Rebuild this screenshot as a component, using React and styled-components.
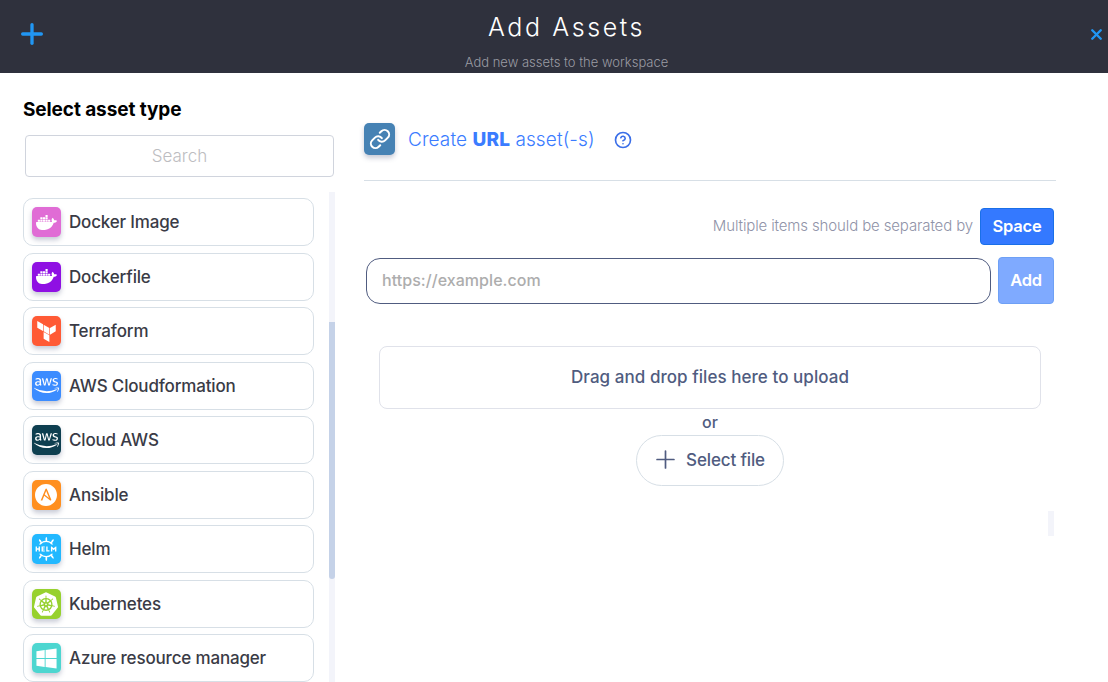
import React from "react";
import styled, { createGlobalStyle } from "styled-components";
import { Plus, X, Link, CircleHelp } from "lucide-react";
import { FaAws, FaWindows } from "react-icons/fa";
import { SiDocker, SiTerraform, SiAnsible, SiHelm, SiKubernetes } from "react-icons/si";

const GlobalStyle = createGlobalStyle`
  html, body {
    margin: 0;
    height: 100%;
    overflow: hidden;
    background: #fff;
    font-family: Inter, "Noto Sans", sans-serif;
  }
  * { box-sizing: border-box; }
`;

const Page = styled.div`
  width: 1108px;
  height: 682px;
  display: flex;
  flex-direction: column;
  overflow: hidden;
`;

const Header = styled.header`
  height: 73px;
  flex: none;
  background: #2f313d;
  display: grid;
  grid-template-columns: 60px 1fr 60px;
  align-items: center;
`;

const HeaderPlus = styled.div`
  display: flex;
  padding: 0 0 6px 16px;
  color: #2196f3;
`;

const HeaderText = styled.div`
  display: flex;
  flex-direction: column;
  align-items: center;
  padding-left: 25px;
`;

const Title = styled.h1`
  margin: 8px 0 0;
  font-size: 25px;
  line-height: 30px;
  font-weight: 300;
  letter-spacing: 2.6px;
  color: #fff;
`;

const Subtitle = styled.div`
  margin-top: 12px;
  font-size: 13px;
  line-height: 16px;
  font-weight: 300;
  color: #9a9ba3;
`;

const CloseBtn = styled.button`
  justify-self: end;
  border: 0;
  background: none;
  padding: 0 3px 5px 0;
  display: flex;
  color: #2196f3;
`;

const Body = styled.div`
  flex: 1;
  min-height: 0;
  display: grid;
  grid-template-columns: 364px 692px;
`;

const Sidebar = styled.aside`
  display: flex;
  flex-direction: column;
  min-height: 0;
  padding: 25px 29px 0 23px;
`;

const SideTitle = styled.h2`
  margin: 0;
  font-size: 19px;
  line-height: 23px;
  font-weight: 700;
  letter-spacing: -0.1px;
  color: #000;
`;

const Search = styled.input`
  width: 309px;
  height: 42px;
  margin: 14px 0 0 2px;
  flex: none;
  border: 1px solid #d0d4dd;
  border-radius: 4px;
  outline: none;
  text-align: center;
  font: 300 17px Inter, sans-serif;
  background: #fff;
  &::placeholder { color: #bdbdc1; }
`;

const ListArea = styled.div`
  flex: 1;
  min-height: 0;
  margin-top: 15px;
  display: grid;
  grid-template-columns: 291px 6px;
  column-gap: 15px;
`;

const List = styled.ul`
  list-style: none;
  margin: 0;
  padding: 6px 0 0;
  overflow: hidden;
  display: flex;
  flex-direction: column;
  gap: 6.5px;
`;

const Row = styled.li`
  height: 48px;
  flex: none;
  display: flex;
  align-items: center;
  gap: 8px;
  padding-left: 7.5px;
  border: 1px solid #d7dfe6;
  border-radius: 10px;
  background: #fff;
  font-size: 17px;
  font-weight: 500;
  letter-spacing: -0.17px;
  color: #3a3b46;
`;

const Tile = styled.span`
  width: 29.5px;
  height: 30px;
  flex: none;
  display: flex;
  align-items: center;
  justify-content: center;
  border-radius: 5px;
  background: ${(p) => p.$bg};
  color: #fff;
  box-shadow: 0 3px 5px rgb(70 80 120 / 0.3);
`;

const Track = styled.div`
  background: #f3f4fa;
`;

const Thumb = styled.div`
  height: 257px;
  margin-top: 130px;
  background: #c5d2e8;
  border-radius: 0 0 3px 3px;
`;

const Main = styled.main`
  display: flex;
  flex-direction: column;
  padding-top: 50px;
`;

const MainHead = styled.div`
  height: 58px;
  flex: none;
  display: flex;
  align-items: flex-start;
  border-bottom: 1px solid #d7dfe6;
`;

const LinkTile = styled.span`
  width: 31px;
  height: 32px;
  display: flex;
  align-items: center;
  justify-content: center;
  border-radius: 5px;
  background: #4682b4;
  color: #fff;
  box-shadow: 0 3px 5px rgb(70 80 120 / 0.3);
`;

const MainTitle = styled.div`
  margin: 4px 0 0 13px;
  font-size: 19px;
  line-height: 26px;
  font-weight: 300;
  letter-spacing: 0.1px;
  color: #3b7cff;
  strong { font-weight: 800; }
`;

const HelpIcon = styled.span`
  display: flex;
  margin: 8px 0 0 19px;
  color: #3b6fe8;
`;

const HintRow = styled.div`
  display: flex;
  justify-content: flex-end;
  align-items: center;
  gap: 7px;
  margin: 27px 2px 0 0;
`;

const Hint = styled.span`
  padding-bottom: 2px;
  font-size: 15px;
  font-weight: 300;
  letter-spacing: -0.13px;
  color: #9093a8;
`;

const SpaceKey = styled.span`
  width: 74px;
  height: 37px;
  padding-bottom: 2px;
  display: flex;
  align-items: center;
  justify-content: center;
  border: 1px solid #1a6fe8;
  border-radius: 4px;
  background: #3479ff;
  color: #fff;
  font-size: 16.5px;
  font-weight: 600;
  letter-spacing: -0.2px;
`;

const InputRow = styled.div`
  display: flex;
  align-items: flex-start;
  gap: 7px;
  margin: 12px 2px 0 2px;
`;

const UrlInput = styled.input`
  width: 625px;
  height: 46px;
  margin-top: 1px;
  padding: 0 15px 2px;
  border: 1px solid #505c80;
  border-radius: 14px;
  outline: none;
  font: 500 16px Inter, sans-serif;
  letter-spacing: 0.05px;
  &::placeholder { color: #adadad; }
`;

const AddBtn = styled.button`
  width: 56px;
  height: 47px;
  padding: 0 0 2px;
  border: 1px solid #6ea0f5;
  border-radius: 4px;
  background: #7faaff;
  color: #fff;
  font: 600 16.5px Inter, sans-serif;
  letter-spacing: -0.2px;
`;

const Upload = styled.div`
  display: flex;
  flex-direction: column;
  align-items: center;
  margin: 42px 15px 0;
`;

const DropZone = styled.div`
  width: 100%;
  height: 63px;
  padding-bottom: 2px;
  display: flex;
  align-items: center;
  justify-content: center;
  border: 1px solid #e0e2ea;
  border-radius: 8px;
  font-size: 17px;
  font-weight: 500;
  letter-spacing: 0.05px;
  color: #505c80;
`;

const Or = styled.div`
  height: 26px;
  display: flex;
  align-items: center;
  font-size: 16px;
  font-weight: 500;
  color: #505c80;
`;

const SelectBtn = styled.button`
  width: 148px;
  height: 51px;
  padding: 0 4px 2px 0;
  display: flex;
  align-items: center;
  justify-content: center;
  gap: 6px;
  border: 1px solid #d7dfe6;
  border-radius: 26px;
  background: #fff;
  color: #505c80;
  font: 500 17px Inter, sans-serif;
  letter-spacing: -0.15px;
`;

const MiniScroll = styled.div`
  width: 6px;
  height: 25px;
  margin: 25px 2px 0 auto;
  background: #f3f4fa;
`;

const AwsIcon = () => <FaAws size={25} />;

const assets = [
  { name: "Docker Image", bg: "#e06cd5", icon: <SiDocker size={21} /> },
  { name: "Dockerfile", bg: "#8f10e3", icon: <SiDocker size={21} /> },
  { name: "Terraform", bg: "#ff5a35", icon: <SiTerraform size={21} /> },
  { name: "AWS Cloudformation", bg: "#3b8cff", icon: <AwsIcon /> },
  { name: "Cloud AWS", bg: "#0e3f50", icon: <AwsIcon /> },
  { name: "Ansible", bg: "#ff8f1f", icon: <SiAnsible size={22} /> },
  { name: "Helm", bg: "#22b8ff", icon: <SiHelm size={24} /> },
  { name: "Kubernetes", bg: "#97d12e", icon: <SiKubernetes size={24} /> },
  { name: "Azure resource manager", bg: "#4dd6d0", icon: <FaWindows size={23} /> },
];

export default function App() {
  return (
    <Page>
      <GlobalStyle />
      <Header>
        <HeaderPlus>
          <Plus size={32} strokeWidth={2.5} />
        </HeaderPlus>
        <HeaderText>
          <Title>Add Assets</Title>
          <Subtitle>Add new assets to the workspace</Subtitle>
        </HeaderText>
        <CloseBtn type="button" aria-label="Close">
          <X size={17} strokeWidth={3.4} />
        </CloseBtn>
      </Header>
      <Body>
        <Sidebar>
          <SideTitle>Select asset type</SideTitle>
          <Search placeholder="Search" />
          <ListArea>
            <List>
              {assets.map((a) => (
                <Row key={a.name}>
                  <Tile $bg={a.bg}>{a.icon}</Tile>
                  {a.name}
                </Row>
              ))}
            </List>
            <Track>
              <Thumb />
            </Track>
          </ListArea>
        </Sidebar>
        <Main>
          <MainHead>
            <LinkTile>
              <Link size={22} strokeWidth={2.2} />
            </LinkTile>
            <MainTitle>
              Create <strong>URL</strong> asset(-s)
            </MainTitle>
            <HelpIcon>
              <CircleHelp size={18} strokeWidth={2.2} />
            </HelpIcon>
          </MainHead>
          <HintRow>
            <Hint>Multiple items should be separated by</Hint>
            <SpaceKey>Space</SpaceKey>
          </HintRow>
          <InputRow>
            <UrlInput placeholder="https://example.com" />
            <AddBtn type="button">Add</AddBtn>
          </InputRow>
          <Upload>
            <DropZone>Drag and drop files here to upload</DropZone>
            <Or>or</Or>
            <SelectBtn type="button">
              <Plus size={29} strokeWidth={1.4} />
              Select file
            </SelectBtn>
          </Upload>
          <MiniScroll />
        </Main>
      </Body>
    </Page>
  );
}
